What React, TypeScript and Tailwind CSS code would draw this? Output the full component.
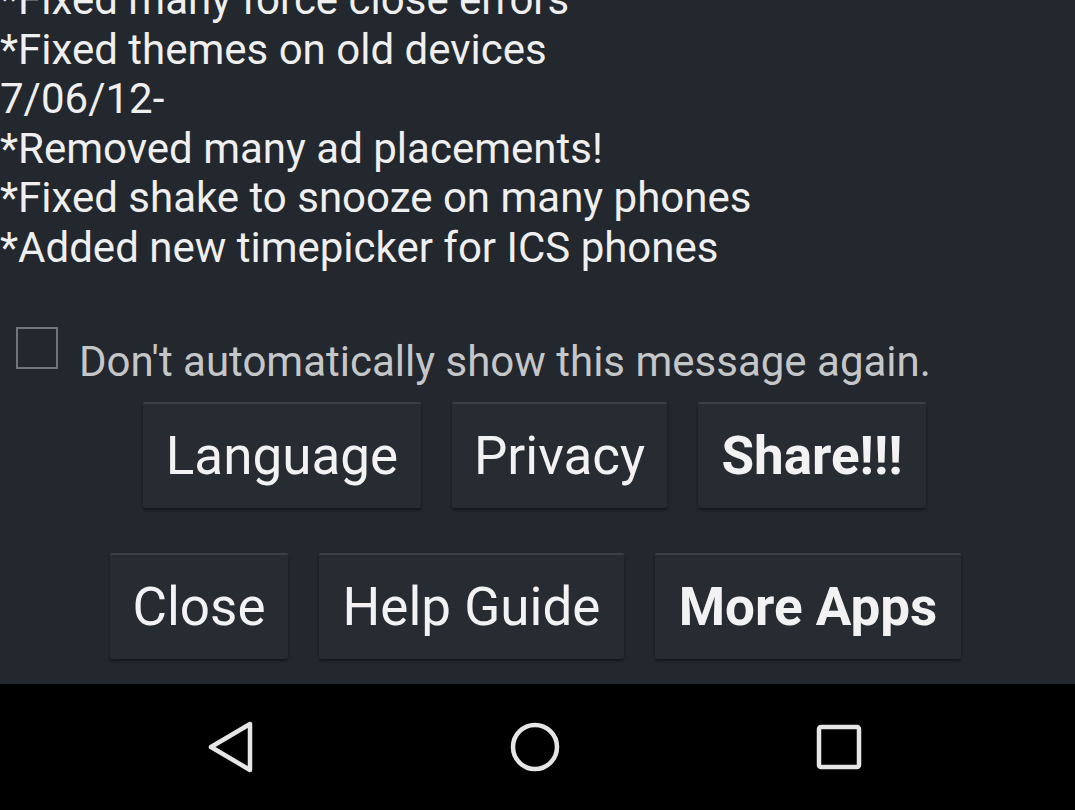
export default function App() {
  const notes = [
    "*Fixed many force close errors",
    "*Fixed themes on old devices",
    "7/06/12-",
    "*Removed many ad placements!",
    "*Fixed shake to snooze on many phones",
    "*Added new timepicker for ICS phones",
  ];

  const btn =
    "h-[106px] bg-[#272b32] border-t-2 border-[#3b3f47] rounded-[2px] shadow-[0_2px_3px_rgba(0,0,0,0.45)] text-[#f2f2f2] text-[53px] leading-none flex items-center justify-center";

  return (
    <div className="w-[1075px] h-[810px] overflow-hidden bg-black flex flex-col" style={{ fontFamily: "Roboto, 'Noto Sans', sans-serif" }}>
      <div className="h-[684px] bg-[#23272e] flex flex-col overflow-hidden">
        <div className="-mt-[25px] text-[42px] leading-[49.5px] text-[#efefef]">
          {notes.map((n) => (
            <div key={n} className="whitespace-nowrap">{n}</div>
          ))}
        </div>

        <div className="mt-[55px] flex items-start">
          <div className="ml-[16px] w-[42px] h-[42px] border-2 border-[#71757b]" />
          <span className="ml-[21px] mt-[14px] text-[42px] text-[#c5c6c8] leading-none">Don't automatically show this message again.</span>
        </div>

        <div className="mt-[19px] flex justify-center gap-[31px] pr-[6px]">
          <div className={`${btn} w-[278px]`}>Language</div>
          <div className={`${btn} w-[215px]`}>Privacy</div>
          <div className={`${btn} w-[228px] font-bold`}>Share!!!</div>
        </div>

        <div className="mt-[45px] flex justify-center gap-[31px] pr-[4px]">
          <div className={`${btn} w-[178px]`}>Close</div>
          <div className={`${btn} w-[305px]`}>Help Guide</div>
          <div className={`${btn} w-[306px] font-bold`}>More Apps</div>
        </div>
      </div>

      <div className="flex-1 bg-black flex items-center">
        <svg className="ml-[205px]" width="52" height="52" viewBox="0 0 52 52" fill="none" stroke="#e6e6e6" strokeWidth="4.5" strokeLinejoin="round">
          <path d="M45 3 L45 49 L6 26 Z" />
        </svg>
        <svg className="ml-[252px]" width="52" height="52" viewBox="0 0 52 52" fill="none" stroke="#e6e6e6" strokeWidth="4.5">
          <circle cx="26" cy="26" r="22" />
        </svg>
        <svg className="ml-[254px]" width="48" height="48" viewBox="0 0 48 48" fill="none" stroke="#e6e6e6" strokeWidth="4.5" strokeLinejoin="round">
          <rect x="4" y="4" width="40" height="40" rx="2" />
        </svg>
      </div>
    </div>
  );
}
